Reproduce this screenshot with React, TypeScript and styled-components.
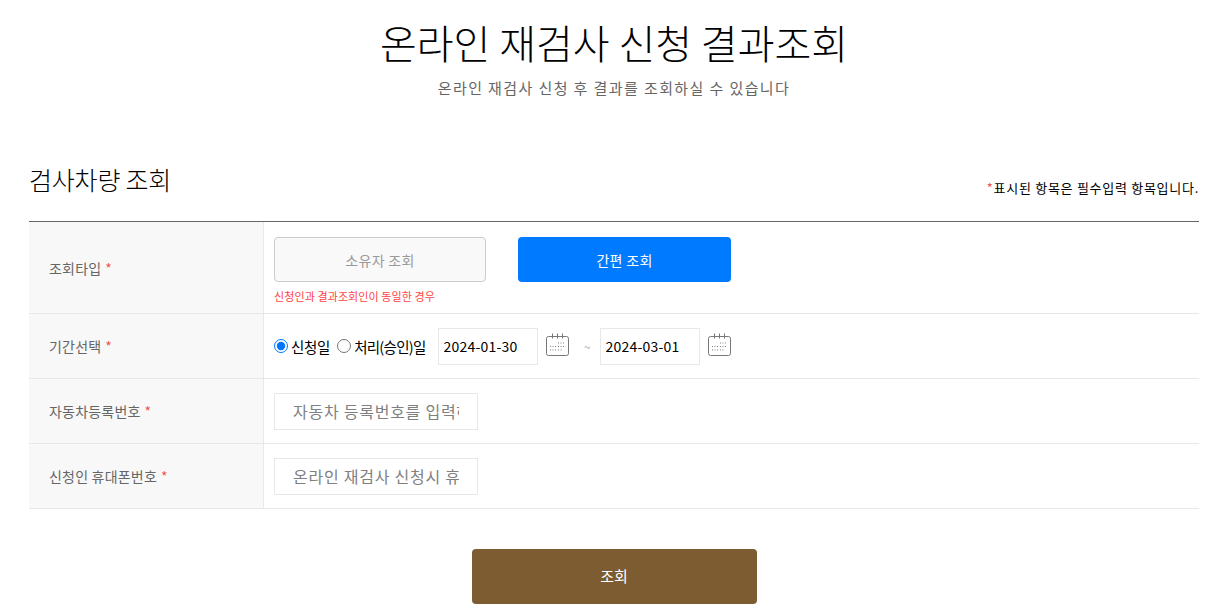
import React from "react";
import styled, { createGlobalStyle } from "styled-components";

const Global = createGlobalStyle`
  html, body { margin: 0; padding: 0; background: #fff; }
  body { font-family: "Noto Sans CJK KR", "Noto Sans", sans-serif; color: #000; overflow: hidden; }
  * { box-sizing: border-box; }
`;
const Page = styled.div`
  width: 1212px; height: 613px; padding: 0 13px 0 29px; overflow: hidden;
`;
const Title = styled.h1`
  margin: 0; padding-top: 13px; height: 75px; text-align: center;
  font-size: 40px; line-height: 58px; font-weight: 300; color: #000;
`;
const Subtitle = styled.p`
  margin: 0; height: 70px; text-align: center; font-size: 15px; line-height: 26px;
  letter-spacing: 1.4px; color: #666; font-weight: 400;
`;
const SectionHead = styled.div`
  display: flex; justify-content: space-between; align-items: flex-end; height: 76px; padding-bottom: 23px;
`;
const SectionTitle = styled.h2`
  margin: 0; font-size: 25px; line-height: 36px; font-weight: 300; color: #000; letter-spacing: -0.2px; position: relative; top: -1px;
`;
const Note = styled.div`
  font-size: 13px; line-height: 20px; color: #000; white-space: nowrap; letter-spacing: 0.72px;
`;
const Star = styled.span`color: #e55;`;
const Table = styled.div`
  border-top: 1px solid #666;
`;
const Row = styled.div<{ $h: number }>`
  display: grid; grid-template-columns: 235px 1fr; height: ${(p) => p.$h}px; border-bottom: 1px solid #e8e8e8;
`;
const Label = styled.div`
  display: flex; align-items: center; background: #f8f8f8; border-right: 1px solid #e8e8e8; padding-left: 20px;
  font-size: 14px; letter-spacing: 0.2px; color: #666; gap: 4px;
`;
const Cell = styled.div`
  display: flex; align-items: center; padding-left: 10px;
`;
const TypeCell = styled.div`
  display: flex; flex-direction: column; padding: 15px 0 0 10px;
`;
const Buttons = styled.div`display: flex; gap: 32px;`;
const OwnerButton = styled.button`
  width: 212px; height: 45px; border: 1px solid #ccc; border-radius: 4px; background: #f9f9f9;
  color: #999; font: inherit; font-size: 14px; letter-spacing: 0.3px; padding: 0;
`;
const QuickButton = styled.button`
  width: 213px; height: 45px; border: 0; border-radius: 4px; background: #007bff;
  color: #fff; font: inherit; font-size: 14px; letter-spacing: 0.3px; padding: 0;
`;
const Hint = styled.div`
  margin-top: 6px; font-size: 11px; line-height: 16px; color: #f44; letter-spacing: 0.1px;
`;
const Radios = styled.div`
  display: flex; align-items: center; margin-right: 5px;
`;
const RadioLabel = styled.label<{ $spacing: number }>`
  display: inline-flex; align-items: center; font-size: 14.5px; color: #000; margin-right: 7px;
  letter-spacing: ${(p) => p.$spacing}px;
`;
const Radio = styled.input`
  width: 14px; height: 14px; margin: 0 3px 0 0; accent-color: #0075ff;
`;
const DateInput = styled.input`
  width: 100px; height: 37px; border: 1px solid #e8e8e8; padding: 0 5px; font: inherit; font-size: 14px;
  letter-spacing: 0.2px; color: #000; outline: 0;
`;
const Tilde = styled.span`
  width: 25px; margin-left: 5px; text-align: center; font-size: 12px; color: #aaa;
`;
const CalWrap = styled.span`
  display: inline-flex; margin: -2px 0 0 8px;
`;
const TextInput = styled.input`
  width: 204px; height: 37px; border: 1px solid #e8e8e8; padding: 0 18px; font: inherit; font-size: 16px;
  letter-spacing: 0.75px; outline: 0;
  &::placeholder { color: #808080; opacity: 1; }
`;
const Actions = styled.div`
  display: flex; justify-content: center; padding-top: 40px;
`;
const Submit = styled.button`
  width: 285px; height: 55px; border: 0; border-radius: 4px; background: #7d5c31; color: #fff;
  font: inherit; font-size: 15px; padding: 0 0 2px;
`;

const Calendar = () => (
  <svg width="24" height="24" viewBox="0 0 24 24" fill="none">
    <rect x="0.5" y="3.5" width="22" height="19" rx="2" stroke="#777" />
    <path d="M6.5 0.5v5M11.5 0.5v5M16.5 0.5v5" stroke="#777" />
    <path
      d="M12 10h1M14.5 10h1M17 10h1M4 13.5h1M6.5 13.5h1M9 13.5h1M12 13.5h1M14.5 13.5h1M17 13.5h1M4 17h1M6.5 17h1M9 17h1M12 17h1M14.5 17h1"
      stroke="#808080"
    />
  </svg>
);

export default function App() {
  return (
    <Page>
      <Global />
      <Title>온라인 재검사 신청 결과조회</Title>
      <Subtitle>온라인 재검사 신청 후 결과를 조회하실 수 있습니다</Subtitle>
      <SectionHead>
        <SectionTitle>검사차량 조회</SectionTitle>
        <Note><Star>*</Star>표시된 항목은 필수입력 항목입니다.</Note>
      </SectionHead>
      <Table>
        <Row $h={92}>
          <Label>조회타입 <Star>*</Star></Label>
          <TypeCell>
            <Buttons>
              <OwnerButton type="button">소유자 조회</OwnerButton>
              <QuickButton type="button">간편 조회</QuickButton>
            </Buttons>
            <Hint>신청인과 결과조회인이 동일한 경우</Hint>
          </TypeCell>
        </Row>
        <Row $h={65}>
          <Label>기간선택 <Star>*</Star></Label>
          <Cell>
            <Radios>
              <RadioLabel $spacing={-0.3}><Radio type="radio" name="p" defaultChecked />신청일</RadioLabel>
              <RadioLabel $spacing={-0.73}><Radio type="radio" name="p" />처리(승인)일</RadioLabel>
            </Radios>
            <DateInput defaultValue="2024-01-30" />
            <CalWrap><Calendar /></CalWrap>
            <Tilde>~</Tilde>
            <DateInput defaultValue="2024-03-01" />
            <CalWrap><Calendar /></CalWrap>
          </Cell>
        </Row>
        <Row $h={65}>
          <Label>자동차등록번호 <Star>*</Star></Label>
          <Cell><TextInput placeholder="자동차 등록번호를 입력하세요" /></Cell>
        </Row>
        <Row $h={65}>
          <Label>신청인 휴대폰번호 <Star>*</Star></Label>
          <Cell><TextInput placeholder="온라인 재검사 신청시 휴대폰번호" /></Cell>
        </Row>
      </Table>
      <Actions><Submit type="button">조회</Submit></Actions>
    </Page>
  );
}
